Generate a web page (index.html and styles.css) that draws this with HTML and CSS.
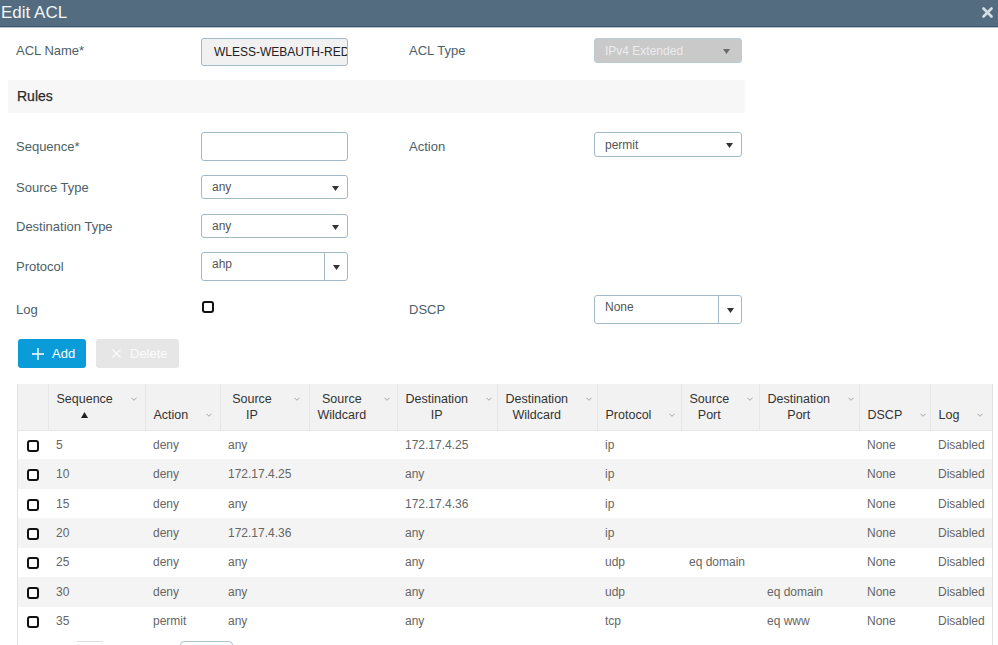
FILE: index.html
```html
<!DOCTYPE html>
<html lang="en">
<head>
<meta charset="utf-8">
<title>Edit ACL</title>
<link rel="stylesheet" href="styles.css">
</head>
<body>
<header class="titlebar">
  <h1 class="title">Edit ACL</h1>
  <button class="close" aria-label="Close">
    <svg width="11" height="11" viewBox="0 0 11 11"><path d="M1.5 1.5L9.5 9.5M9.5 1.5L1.5 9.5" stroke="#d6dde2" stroke-width="2.6" stroke-linecap="round"/></svg>
  </button>
</header>

<main class="content">
  <div class="form-row row-name">
    <div class="field">
      <label class="lbl">ACL Name*</label>
      <div class="textbox readonly">WLESS-WEBAUTH-REDIRECT</div>
    </div>
    <div class="field">
      <label class="lbl">ACL Type</label>
      <div class="select disabled top"><span class="sel-text">IPv4 Extended</span><svg class="arrow" width="7" height="5" viewBox="0 0 7 5"><path d="M0 0H7L3.5 5Z" fill="#6a6a6a"/></svg></div>
    </div>
  </div>

  <div class="band">Rules</div>

  <div class="form-row row-seq">
    <div class="field">
      <label class="lbl">Sequence*</label>
      <div class="textbox tall"></div>
    </div>
    <div class="field">
      <label class="lbl">Action</label>
      <div class="select top"><span class="sel-text">permit</span><svg class="arrow" width="7" height="5" viewBox="0 0 7 5"><path d="M0 0H7L3.5 5Z" fill="#333"/></svg></div>
    </div>
  </div>

  <div class="form-row row-src">
    <div class="field">
      <label class="lbl">Source Type</label>
      <div class="select"><span class="sel-text">any</span><svg class="arrow" width="7" height="5" viewBox="0 0 7 5"><path d="M0 0H7L3.5 5Z" fill="#333"/></svg></div>
    </div>
  </div>

  <div class="form-row row-dst">
    <div class="field">
      <label class="lbl">Destination Type</label>
      <div class="select"><span class="sel-text">any</span><svg class="arrow" width="7" height="5" viewBox="0 0 7 5"><path d="M0 0H7L3.5 5Z" fill="#333"/></svg></div>
    </div>
  </div>

  <div class="form-row row-proto">
    <div class="field">
      <label class="lbl">Protocol</label>
      <div class="combo"><span class="combo-text">ahp</span><span class="combo-btn"><svg width="7" height="5" viewBox="0 0 7 5"><path d="M0 0H7L3.5 5Z" fill="#333"/></svg></span></div>
    </div>
  </div>

  <div class="form-row row-log">
    <div class="field">
      <label class="lbl">Log</label>
      <span class="check form-check"></span>
    </div>
    <div class="field">
      <label class="lbl">DSCP</label>
      <div class="combo"><span class="combo-text">None</span><span class="combo-btn"><svg width="7" height="5" viewBox="0 0 7 5"><path d="M0 0H7L3.5 5Z" fill="#333"/></svg></span></div>
    </div>
  </div>

  <div class="actions">
    <button class="btn btn-add">
      <svg width="12" height="12" viewBox="0 0 12 12"><path d="M6 0V12M0 6H12" stroke="#fff" stroke-width="1.4"/></svg>
      <span>Add</span>
    </button>
    <button class="btn btn-delete">
      <svg width="9" height="9" viewBox="0 0 9 9"><path d="M0.5 0.5L8.5 8.5M8.5 0.5L0.5 8.5" stroke="#fbfbfb" stroke-width="1.2"/></svg>
      <span>Delete</span>
    </button>
  </div>

  <div class="table-wrap">
    <table class="rules">
      <colgroup>
        <col class="c-cb"><col class="c-seq"><col class="c-act"><col class="c-sip"><col class="c-swc"><col class="c-dip"><col class="c-dwc"><col class="c-pro"><col class="c-sp"><col class="c-dp"><col class="c-dscp"><col class="c-log">
      </colgroup>
      <thead>
        <tr>
          <th></th>
          <th><div class="th-inner"><div class="th-label center">Sequence<br><svg class="sort" width="7" height="6" viewBox="0 0 7 6"><path d="M3.5 0L7 6H0Z" fill="#222"/></svg></div><svg class="chev" width="7" height="4" viewBox="0 0 7 4"><path d="M0.5 0.5L3.5 3.5L6.5 0.5" fill="none" stroke="#999" stroke-width="1"/></svg></div></th>
          <th><div class="th-inner"><div class="th-label">Action</div><svg class="chev" width="7" height="4" viewBox="0 0 7 4"><path d="M0.5 0.5L3.5 3.5L6.5 0.5" fill="none" stroke="#999" stroke-width="1"/></svg></div></th>
          <th><div class="th-inner"><div class="th-label center">Source<br>IP</div><svg class="chev" width="7" height="4" viewBox="0 0 7 4"><path d="M0.5 0.5L3.5 3.5L6.5 0.5" fill="none" stroke="#999" stroke-width="1"/></svg></div></th>
          <th><div class="th-inner"><div class="th-label center">Source<br>Wildcard</div><svg class="chev" width="7" height="4" viewBox="0 0 7 4"><path d="M0.5 0.5L3.5 3.5L6.5 0.5" fill="none" stroke="#999" stroke-width="1"/></svg></div></th>
          <th><div class="th-inner"><div class="th-label center">Destination<br>IP</div><svg class="chev" width="7" height="4" viewBox="0 0 7 4"><path d="M0.5 0.5L3.5 3.5L6.5 0.5" fill="none" stroke="#999" stroke-width="1"/></svg></div></th>
          <th><div class="th-inner"><div class="th-label center">Destination<br>Wildcard</div><svg class="chev" width="7" height="4" viewBox="0 0 7 4"><path d="M0.5 0.5L3.5 3.5L6.5 0.5" fill="none" stroke="#999" stroke-width="1"/></svg></div></th>
          <th><div class="th-inner"><div class="th-label">Protocol</div><svg class="chev" width="7" height="4" viewBox="0 0 7 4"><path d="M0.5 0.5L3.5 3.5L6.5 0.5" fill="none" stroke="#999" stroke-width="1"/></svg></div></th>
          <th><div class="th-inner"><div class="th-label center">Source<br>Port</div><svg class="chev" width="7" height="4" viewBox="0 0 7 4"><path d="M0.5 0.5L3.5 3.5L6.5 0.5" fill="none" stroke="#999" stroke-width="1"/></svg></div></th>
          <th><div class="th-inner"><div class="th-label center">Destination<br>Port</div><svg class="chev" width="7" height="4" viewBox="0 0 7 4"><path d="M0.5 0.5L3.5 3.5L6.5 0.5" fill="none" stroke="#999" stroke-width="1"/></svg></div></th>
          <th><div class="th-inner"><div class="th-label">DSCP</div><svg class="chev" width="7" height="4" viewBox="0 0 7 4"><path d="M0.5 0.5L3.5 3.5L6.5 0.5" fill="none" stroke="#999" stroke-width="1"/></svg></div></th>
          <th><div class="th-inner"><div class="th-label">Log</div><svg class="chev" width="7" height="4" viewBox="0 0 7 4"><path d="M0.5 0.5L3.5 3.5L6.5 0.5" fill="none" stroke="#999" stroke-width="1"/></svg></div></th>
        </tr>
      </thead>
      <tbody>
        <tr><td class="cb"><span class="check"></span></td><td>5</td><td>deny</td><td>any</td><td></td><td>172.17.4.25</td><td></td><td>ip</td><td></td><td></td><td>None</td><td>Disabled</td></tr>
        <tr><td class="cb"><span class="check"></span></td><td>10</td><td>deny</td><td>172.17.4.25</td><td></td><td>any</td><td></td><td>ip</td><td></td><td></td><td>None</td><td>Disabled</td></tr>
        <tr><td class="cb"><span class="check"></span></td><td>15</td><td>deny</td><td>any</td><td></td><td>172.17.4.36</td><td></td><td>ip</td><td></td><td></td><td>None</td><td>Disabled</td></tr>
        <tr><td class="cb"><span class="check"></span></td><td>20</td><td>deny</td><td>172.17.4.36</td><td></td><td>any</td><td></td><td>ip</td><td></td><td></td><td>None</td><td>Disabled</td></tr>
        <tr><td class="cb"><span class="check"></span></td><td>25</td><td>deny</td><td>any</td><td></td><td>any</td><td></td><td>udp</td><td>eq domain</td><td></td><td>None</td><td>Disabled</td></tr>
        <tr><td class="cb"><span class="check"></span></td><td>30</td><td>deny</td><td>any</td><td></td><td>any</td><td></td><td>udp</td><td></td><td>eq domain</td><td>None</td><td>Disabled</td></tr>
        <tr><td class="cb"><span class="check"></span></td><td>35</td><td>permit</td><td>any</td><td></td><td>any</td><td></td><td>tcp</td><td></td><td>eq www</td><td>None</td><td>Disabled</td></tr>
      </tbody>
    </table>
    <div class="pager">
      <span class="pager-box"></span>
      <span class="pager-select"></span>
    </div>
  </div>
</main>
</body>
</html>
```

FILE: styles.css
```css
* { box-sizing: border-box; }

html, body {
  margin: 0;
  padding: 0;
  height: 645px;
  overflow: hidden;
  background: #fff;
  font-family: "Liberation Sans", Arial, sans-serif;
}

.titlebar {
  height: 27px;
  background: #536c7f;
  border-bottom: 1px solid #3d5263;
  box-shadow: 0 1px 0 #b9c3ca;
  display: flex;
  align-items: center;
  justify-content: space-between;
}

.title {
  margin: 0 0 0 1px;
  font-size: 17px;
  font-weight: normal;
  color: #f4f6f8;
  line-height: 26px;
}

.close {
  border: 0;
  background: none;
  padding: 0;
  margin: 0 5px 2px 0;
  width: 11px;
  height: 11px;
  display: flex;
}

.content {
  padding-top: 11px;
}

.form-row {
  display: flex;
  padding-left: 16px;
}

.field {
  display: flex;
  align-items: center;
  width: 393px;
}

.lbl {
  width: 185px;
  flex: none;
  font-size: 13px;
  color: #4c6169;
}

.row-name { height: 28px; }
.row-name .lbl { margin-bottom: 3px; }
.row-seq { height: 29px; margin-top: 19px; }
.row-src { height: 24px; margin-top: 14px; }
.row-dst { height: 24px; margin-top: 15px; }
.row-proto { height: 29px; margin-top: 14px; }
.row-log { height: 29px; margin-top: 14px; }

.band {
  margin: 14px 0 0 8px;
  width: 737px;
  height: 33px;
  line-height: 33px;
  padding-left: 9px;
  background: #f7f7f7;
  font-size: 14px;
  color: #2b2b2b;
  -webkit-text-stroke: 0.25px #2b2b2b;
}

.textbox {
  width: 147px;
  height: 28px;
  border: 1px solid #a2bac7;
  border-radius: 3px;
  background: #fff;
  overflow: hidden;
  white-space: nowrap;
  font-size: 12px;
  line-height: 26px;
  padding-left: 12px;
  color: #222;
}
.textbox.readonly { background: #f1f1f1; }
.textbox.tall { height: 29px; }

.select {
  width: 147px;
  height: 24px;
  border: 1px solid #a2bac7;
  border-radius: 3px;
  background: #fff;
  display: flex;
  align-items: center;
  justify-content: space-between;
  padding: 0 8px 0 10px;
  font-size: 12px;
  color: #555;
}
.select.top {
  align-self: flex-start;
  height: 25px;
  width: 148px;
}
.select .arrow { margin-top: 2px; }
.select.disabled {
  background: #c9c9c9;
  border-color: #b9ccd6;
  color: #ececec;
  padding-right: 11px;
}

.combo {
  width: 147px;
  height: 29px;
  border: 1px solid #a2bac7;
  border-radius: 3px;
  background: #fff;
  display: flex;
  font-size: 12px;
  color: #555;
}
.field:nth-child(2) .combo { width: 148px; }
.combo-text {
  flex: 1;
  padding: 4px 0 0 10px;
  line-height: 14px;
}
.combo-btn {
  width: 23px;
  border-left: 1px solid #a2bac7;
  display: flex;
  align-items: center;
  justify-content: center;
  padding-top: 2px;
}

.check {
  display: inline-block;
  width: 12px;
  height: 12px;
  border: 2px solid #111;
  border-radius: 3px;
  background: #fff;
}
.form-check {
  margin: 0 0 5px 1px;
}

.actions {
  display: flex;
  gap: 10px;
  margin: 15px 0 0 18px;
  height: 29px;
}

.btn {
  height: 29px;
  border: 0;
  border-radius: 3px;
  display: flex;
  align-items: center;
  font-family: "Liberation Sans", Arial, sans-serif;
  font-size: 13px;
  padding: 0;
}
.btn-add {
  width: 68px;
  background: #0a9cd8;
  color: #fff;
  padding-left: 14px;
  gap: 8px;
}
.btn-delete {
  width: 83px;
  background: #e6e6e6;
  color: #fbfbfb;
  padding-left: 16px;
  gap: 9px;
}

.table-wrap {
  margin: 16px 0 0 17px;
  width: 976px;
  border-left: 1px solid #e3e3e3;
  border-right: 1px solid #e3e3e3;
}

.rules {
  width: 974px;
  table-layout: fixed;
  border-collapse: collapse;
}

.c-cb { width: 30px; }
.c-seq { width: 97px; }
.c-act { width: 75px; }
.c-sip { width: 89px; }
.c-swc { width: 88px; }
.c-dip { width: 100px; }
.c-dwc { width: 100px; }
.c-pro { width: 84px; }
.c-sp { width: 78px; }
.c-dp { width: 100px; }
.c-dscp { width: 71px; }
.c-log { width: 62px; }

.rules th {
  height: 46px;
  background: #f2f2f2;
  border-left: 1px solid #e6e6e6;
  border-bottom: 1px solid #e6e6e6;
  vertical-align: bottom;
  padding: 0 9px 7px 8px;
  font-size: 12.5px;
  font-weight: normal;
  color: #333;
  line-height: 16px;
  text-align: left;
}
.rules th:first-child { border-left: 0; }

.th-inner {
  display: flex;
  align-items: flex-start;
}
.th-label {
  flex: 1;
  margin-right: 18px;
  white-space: nowrap;
}
.th-label.center { text-align: center; }
.th-label .sort { margin-top: 5px; vertical-align: top; }
.chev {
  flex: none;
  width: 6px;
  margin-top: 6px;
}

.rules td {
  height: 29.43px;
  padding: 0 0 0 8px;
  font-size: 12px;
  color: #666;
  white-space: nowrap;
  overflow: hidden;
}
.rules tbody tr:nth-child(even) td { background: #f4f4f4; }
.rules td.cb {
  padding-left: 9px;
  line-height: 0;
}
.rules td.cb .check { margin-top: 2px; }

.pager {
  display: flex;
  align-items: flex-start;
  height: 20px;
  margin-top: 5px;
  padding-left: 59px;
}
.pager-box {
  width: 26px;
  height: 20px;
  border-top: 1px solid #dedede;
}
.pager-select {
  margin-left: 77px;
  width: 53px;
  height: 22px;
  border: 1px solid #a9c3d0;
  border-radius: 4px;
}
```
